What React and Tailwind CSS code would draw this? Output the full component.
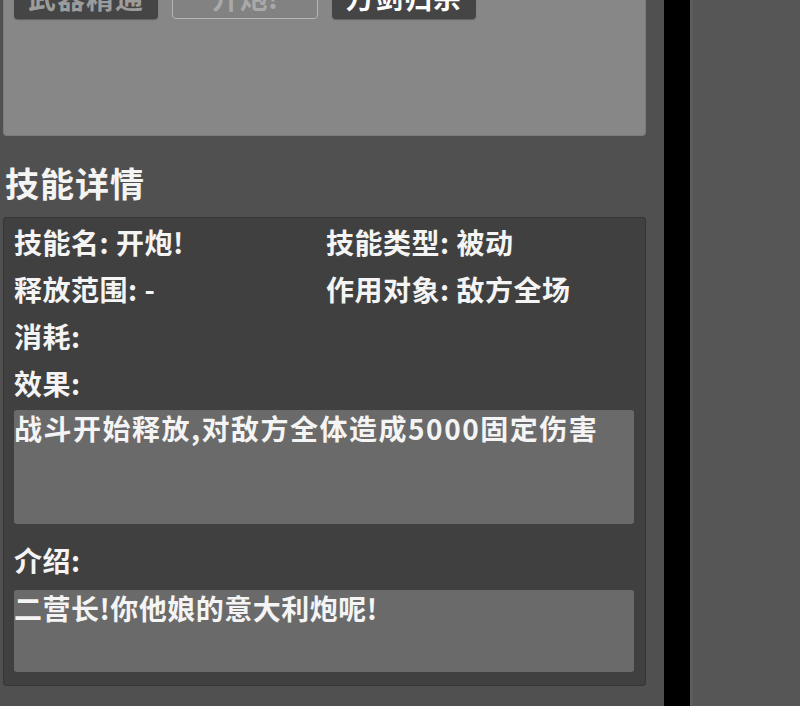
import React from "react";

const font = { fontFamily: '"Noto Sans CJK SC", "Noto Sans", sans-serif' };

function Row({ label, value }) {
  return (
    <div className="leading-[47px] whitespace-nowrap">
      {label}:{value ? " " + value : ""}
    </div>
  );
}

export default function App() {
  return (
    <div
      className="w-[800px] h-[706px] flex overflow-hidden bg-[#505050] text-[#f4f4f4] font-bold"
      style={font}
    >
      <div className="w-[664px] flex flex-col bg-[#505050]">
        {/* top panel */}
        <div className="ml-[3px] w-[643px] h-[136px] bg-[#878787] border border-t-0 border-[#7b7b7b] rounded-b-[4px] px-[10px]">
          <div className="mt-[-25px] flex gap-[14px] text-[28px] leading-[44px]">
            <div className="w-[144px] h-[44px] rounded-[4px] bg-[#454545] text-[#9c9c9c] text-center tracking-[1px] shadow-[0_1px_1px_rgba(0,0,0,0.3)]">
              武器精通
            </div>
            <div className="w-[146px] h-[44px] rounded-[4px] bg-[#828282] border border-[#b4b4b4] text-[#a9a9a9] text-center leading-[42px]">
              开炮!
            </div>
            <div className="w-[144px] h-[44px] rounded-[4px] bg-[#454545] text-white text-center tracking-[1px] shadow-[0_1px_1px_rgba(0,0,0,0.3)]">
              万剑归宗
            </div>
          </div>
        </div>

        {/* heading */}
        <div className="mt-[27px] ml-[5px] text-[34px] leading-[40px] tracking-[1px]">
          技能详情
        </div>

        {/* details panel */}
        <div className="mt-[14px] ml-[3px] w-[643px] h-[469px] bg-[#404040] border border-[#353535] rounded-[3px] pl-[10px] pr-[11px] pt-[1px] text-[28px] tracking-[0.5px]">
          <div className="grid grid-cols-[312px_1fr]">
            <Row label="技能名" value="开炮!" />
            <Row label="技能类型" value="被动" />
            <Row label="释放范围" value="-" />
            <Row label="作用对象" value="敌方全场" />
            <Row label="消耗" />
            <div />
            <Row label="效果" />
            <div />
          </div>
          <div className="mt-[3px] h-[114px] bg-[#6a6a6a] rounded-[3px] leading-[36px] whitespace-nowrap tracking-[1.5px]">
            战斗开始释放,对敌方全体造成5000固定伤害
          </div>
          <div className="mt-[13px]">
            <Row label="介绍" />
          </div>
          <div className="mt-[6px] h-[82px] bg-[#6a6a6a] rounded-[3px] leading-[36px] whitespace-nowrap">
            二营长!你他娘的意大利炮呢!
          </div>
        </div>
      </div>

      <div className="w-[26px] bg-black" />
      <div className="flex-1 bg-[#565656] border-l-[3px] border-[#5d5d5d]" />
    </div>
  );
}
